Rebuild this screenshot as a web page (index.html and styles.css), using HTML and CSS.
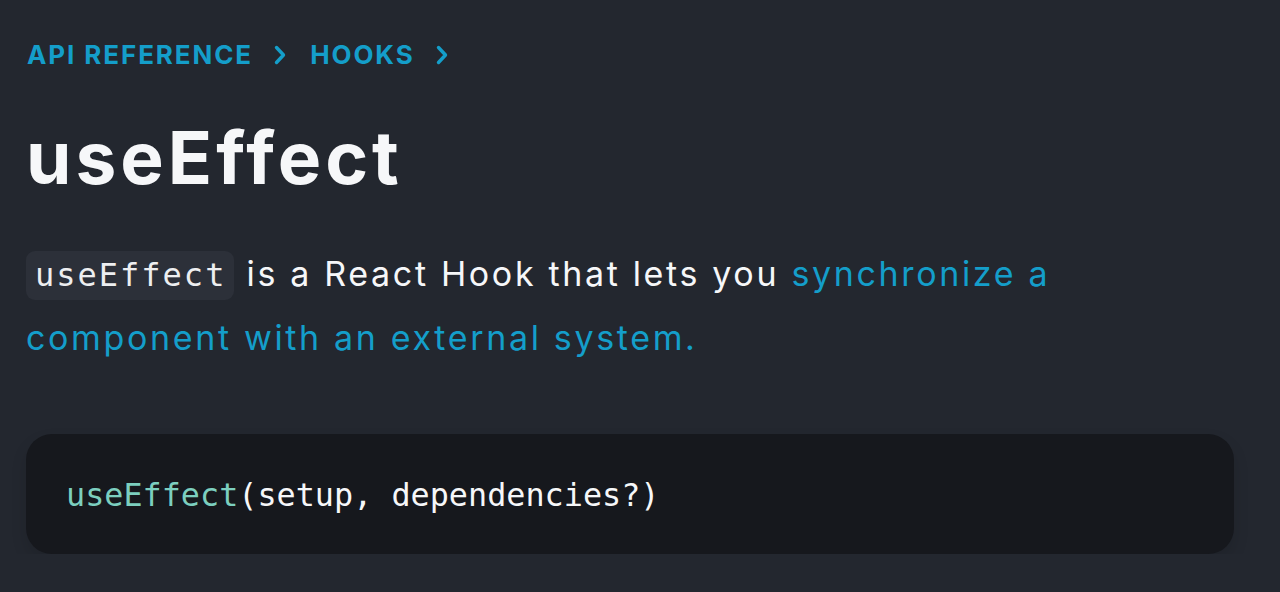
FILE: index.html
```html
<!DOCTYPE html>
<html lang="en">
<head>
<meta charset="utf-8">
<title>useEffect</title>
<link rel="stylesheet" href="styles.css">
</head>
<body>
<main class="page">
  <nav class="breadcrumbs">
    <a class="crumb" href="#">API Reference</a>
    <svg class="chev" viewBox="0 0 12 20" width="12" height="20" aria-hidden="true"><path d="M2.5 2.5 L9.5 10 L2.5 17.5" fill="none" stroke="currentColor" stroke-width="3.4" stroke-linecap="round" stroke-linejoin="round"/></svg>
    <a class="crumb" href="#">Hooks</a>
    <svg class="chev" viewBox="0 0 12 20" width="12" height="20" aria-hidden="true"><path d="M2.5 2.5 L9.5 10 L2.5 17.5" fill="none" stroke="currentColor" stroke-width="3.4" stroke-linecap="round" stroke-linejoin="round"/></svg>
  </nav>
  <h1 class="title">useEffect</h1>
  <p class="intro"><code class="inline-code">useEffect</code> is a React Hook that lets you <a class="link" href="#">synchronize a component with an external system.</a></p>
  <pre class="code-block"><code><span class="fn">useEffect</span>(setup, dependencies?)</code></pre>
</main>
</body>
</html>
```
FILE: styles.css
```css
html, body {
  margin: 0;
  padding: 0;
  background: #23272f;
}
body {
  font-family: Inter, "Noto Sans", sans-serif;
  color: #f6f7f9;
}
.page {
  width: 1208px;
  padding: 38px 0 0 26px;
}
.breadcrumbs {
  display: flex;
  align-items: center;
  gap: 23px;
  height: 34px;
  color: #149eca;
}
.crumb {
  color: #149eca;
  text-decoration: none;
  text-transform: uppercase;
  font-weight: 700;
  font-size: 26px;
  letter-spacing: 1.9px;
  line-height: 34px;
  padding-left: 1px;
  margin-right: -1.9px;
}
.chev {
  display: block;
  flex: none;
}
.title {
  margin: 36px 0 0 0;
  font-size: 73px;
  font-weight: 700;
  line-height: 100px;
  letter-spacing: 4px;
  color: #f6f7f9;
}
.intro {
  margin: 34px 0 0 0;
  font-size: 34px;
  line-height: 64px;
  letter-spacing: 2.65px;
  color: #f6f7f9;
}
.inline-code {
  display: inline-block;
  font-family: "DejaVu Sans Mono", "Liberation Mono", monospace;
  font-size: 32px;
  line-height: 49px;
  letter-spacing: 2px;
  background: #2c3039;
  border-radius: 9px;
  padding: 0 8px 0 9px;
  color: #edeef0;
}
.link {
  color: #149eca;
  text-decoration: none;
}
.code-block {
  margin: 64px 0 0 0;
  height: 120px;
  box-sizing: border-box;
  display: flex;
  align-items: center;
  padding: 0 40px;
  background: #16181d;
  border-radius: 26px;
  box-shadow: 0 8px 16px rgba(0, 0, 0, 0.12);
  font-family: "DejaVu Sans Mono", "Liberation Mono", monospace;
  font-size: 31.8px;
  color: #f6f7f9;
}
.fn {
  color: #7ccfbf;
}
```
